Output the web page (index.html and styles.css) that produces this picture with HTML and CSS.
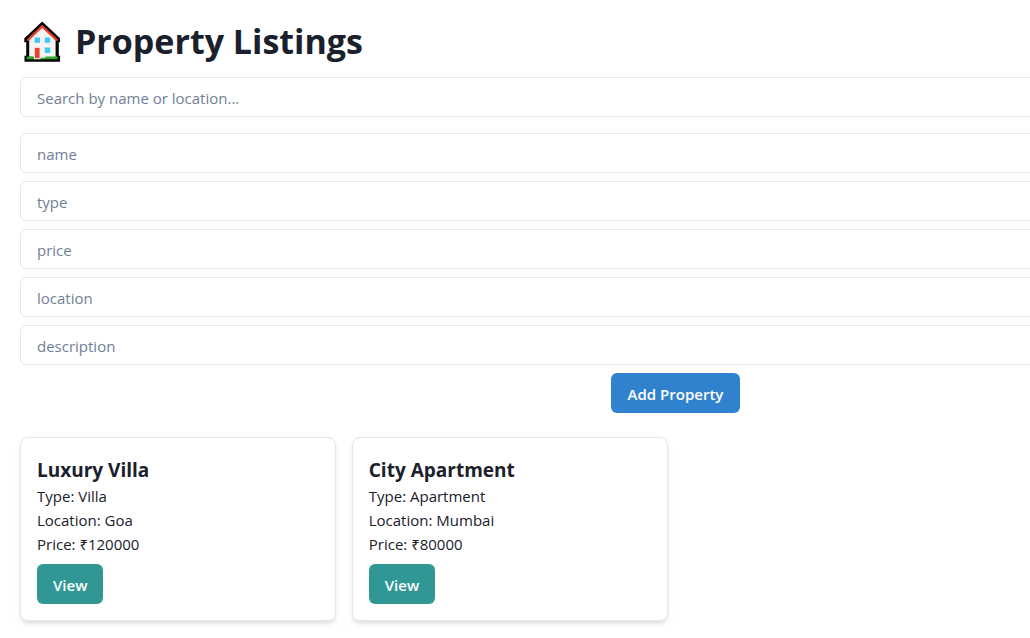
FILE: index.html
```html
<!DOCTYPE html>
<html lang="en">
<head>
<meta charset="utf-8">
<meta name="viewport" content="width=device-width, initial-scale=1">
<title>Property Listings</title>
<link rel="stylesheet" href="styles.css">
</head>
<body>
<main class="page">
  <h1 class="title">
    <svg class="title-icon" viewBox="0 0 44 43" aria-hidden="true">
      <path d="M22.2 1.6 4.3 18.3v3.9h1.9v13.6H4.5v6h35.6v-6h-1.3V22.2h1.3v-3.9z" fill="#050505"/>
      <path d="M9.2 19 22.2 7.5 35.6 19v19.5H9.2z" fill="#f3f3f3"/>
      <path d="M7 19.2 22.2 4.8l15.4 14.4v1.6h-1.8L22.2 8 8.8 20.8H7z" fill="#e8432a"/>
      <path d="M6.5 39.2v-1.6l2.2-1.4H13l1.5 1.6h10l1.5-1.2h11.5v2.6z" fill="#2fa82f"/>
      <path d="M14 27h6.5v12.2H14z" fill="#f8f8f8"/>
      <path d="M14.8 27.8h4.8v10.4h-4.8z" fill="#e8432a"/>
      <path d="M14.6 17.4H20v5.4h-5.4zM24.8 17.4h5.4v5.4h-5.4zM24.8 27.6h5.4V33h-5.4z" fill="#3fc8f4"/>
    </svg>
    <span>Property Listings</span>
  </h1>
  <input class="field" type="search" aria-label="Search by name or location" placeholder="Search by name or location...">
  <form class="form">
    <input class="field" type="text" name="name" aria-label="name" placeholder="name">
    <input class="field" type="text" name="type" aria-label="type" placeholder="type">
    <input class="field" type="text" name="price" aria-label="price" placeholder="price">
    <input class="field" type="text" name="location" aria-label="location" placeholder="location">
    <input class="field" type="text" name="description" aria-label="description" placeholder="description">
    <button class="button button-blue" type="submit">Add Property</button>
  </form>
  <section class="cards" aria-label="Properties">
    <article class="card">
      <h2 class="card-title">Luxury Villa</h2>
      <p>Type: Villa</p>
      <p>Location: Goa</p>
      <p>Price: ₹120000</p>
      <button class="button button-teal" type="button">View</button>
    </article>
    <article class="card">
      <h2 class="card-title">City Apartment</h2>
      <p>Type: Apartment</p>
      <p>Location: Mumbai</p>
      <p>Price: ₹80000</p>
      <button class="button button-teal" type="button">View</button>
    </article>
  </section>
</main>
</body>
</html>
```
FILE: styles.css
```css
*, *::before, *::after { box-sizing: border-box; }
html { overflow-x: clip; }
body {
  margin: 0;
  overflow-x: clip;
  background: #fff;
  color: #1a202c;
  font-family: "Segoe UI", "Open Sans", "Noto Sans", sans-serif;
  font-size: 15px;
  line-height: 24px;
}
h1, h2, p { margin: 0; }
/* The page runs wider than the window. */
.page { width: calc(100vw + 321px); padding: 20px; }
.title {
  display: flex;
  align-items: center;
  gap: 11px;
  margin-bottom: 14px;
  font-size: 34px;
  line-height: 43px;
  font-weight: 700;
}
.title-icon { width: 44px; height: 43px; }
.field {
  display: block;
  width: 100%;
  height: 40px;
  margin: 0;
  padding: 2px 16px 0;
  border: 1px solid #e4e6e9;
  border-radius: 6px;
  background: #fff;
  color: inherit;
  font: inherit;
  appearance: none;
}
.field::placeholder { color: #718096; opacity: 1; }
.form {
  display: flex;
  flex-direction: column;
  align-items: center;
  gap: 8px;
  margin: 16px 0 24px;
}
.button {
  height: 40px;
  padding: 2px 16px 0;
  border: 0;
  border-radius: 6px;
  color: #fff;
  font: inherit;
  font-weight: 600;
}
.button-blue { padding-inline: 17px; background: #3182ce; }
.button-teal { margin-top: 8px; background: #319795; }
.cards {
  display: grid;
  grid-template-columns: repeat(auto-fill, minmax(300px, 1fr));
  gap: 16px;
}
.card {
  padding: 16px;
  border: 1px solid #e4e6e9;
  border-radius: 8px;
  box-shadow: 0 4px 6px -1px rgba(0, 0, 0, .1), 0 2px 4px -1px rgba(0, 0, 0, .06);
}
.card-title { padding-top: 3px; font-size: 19px; line-height: 27px; font-weight: 700; }
```
